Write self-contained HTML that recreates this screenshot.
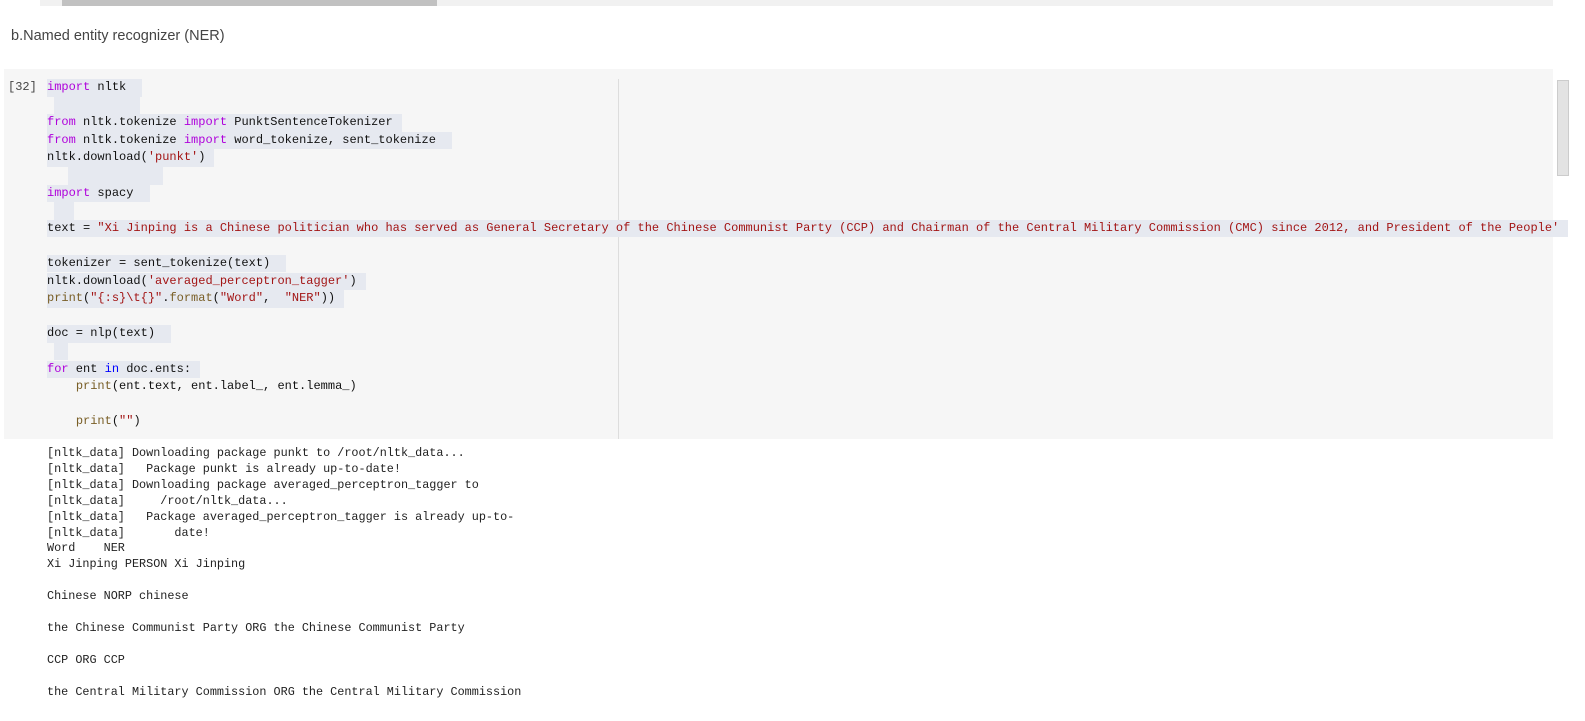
<!DOCTYPE html>
<html><head><meta charset="utf-8"><style>
body{margin:0;width:1585px;height:721px;overflow:hidden;background:#fff;position:relative;font-family:"Liberation Sans",sans-serif}
.hs{position:absolute;left:40px;top:0;width:1513px;height:6px;background:#f1f1f1}
.ht{position:absolute;left:62px;top:0;width:375px;height:6px;background:#c1c1c1}
.title{position:absolute;left:11px;top:28px;font-size:14.5px;color:#444}
.cell{position:absolute;left:4px;top:69px;width:1549px;height:370px;background:#f6f6f6}
.vl{position:absolute;left:618px;top:79px;width:1px;height:360px;background:#ddd}
.num{position:absolute;left:8px;top:79px;font:12px "Liberation Mono",monospace;color:#444;line-height:17.6px}
.l{position:absolute;left:47px;font:12px/17.6px "Liberation Mono",monospace;color:#111;white-space:pre}
.l span.h{background:#e6e9f0;padding-right:9px;display:inline-block}
.k{color:#af00db}.b{color:#0000ff}.s{color:#a31515}.f{color:#795e26}
.bl{position:absolute;left:54px;height:17.6px;background:#e6e9f0}
.o{position:absolute;left:47px;font:11.8px/15.9px "Liberation Mono",monospace;color:#222;white-space:pre}
.sb{position:absolute;left:1557px;top:80px;width:10px;height:94px;background:#e3e3e3;border:1px solid #ccc}
</style></head><body>
<div class="hs"></div><div class="ht"></div>
<div class="title">b.Named entity recognizer (NER)</div>
<div class="cell"></div><div class="vl"></div>
<div class="num">[32]</div>
<div class="l" style="top:79px"><span class="h"><span class="k">import</span> nltk </span></div>
<div class="bl" style="top:96.6px;width:86px"></div>
<div class="l" style="top:114.2px"><span class="h"><span class="k">from</span> nltk.tokenize <span class="k">import</span> PunktSentenceTokenizer</span></div>
<div class="l" style="top:131.8px"><span class="h"><span class="k">from</span> nltk.tokenize <span class="k">import</span> word_tokenize, sent_tokenize </span></div>
<div class="l" style="top:149.4px"><span class="h">nltk.download(<span class="s">'punkt'</span>)</span></div>
<div class="bl" style="top:167px;width:95px;left:68px"></div>
<div class="l" style="top:184.6px"><span class="h"><span class="k">import</span> spacy </span></div>
<div class="bl" style="top:202.2px;width:20px"></div>
<div class="l" style="top:219.8px"><span class="h">text = <span class="s">"Xi Jinping is a Chinese politician who has served as General Secretary of the Chinese Communist Party (CCP) and Chairman of the Central Military Commission (CMC) since 2012, and President of the People'</span></span></div>
<div class="l" style="top:254.9px"><span class="h">tokenizer = sent_tokenize(text) </span></div>
<div class="l" style="top:272.5px"><span class="h">nltk.download(<span class="s">'averaged_perceptron_tagger'</span>)</span></div>
<div class="l" style="top:290.1px"><span class="h"><span class="f">print</span>(<span class="s">"{:s}\t{}"</span>.<span class="f">format</span>(<span class="s">"Word"</span>,  <span class="s">"NER"</span>))</span></div>
<div class="l" style="top:325.3px"><span class="h">doc = nlp(text) </span></div>
<div class="bl" style="top:342.9px;width:14px"></div>
<div class="l" style="top:360.5px"><span class="h"><span class="k">for</span> ent <span class="b">in</span> doc.ents:</span></div>
<div class="l" style="top:378.1px">    <span class="f">print</span>(ent.text, ent.label_, ent.lemma_)</div>
<div class="l" style="top:413.3px">    <span class="f">print</span>(<span class="s">""</span>)</div>
<div class="sb"></div>
<div class="o" style="top:446px">[nltk_data] Downloading package punkt to /root/nltk_data...
[nltk_data]   Package punkt is already up-to-date!
[nltk_data] Downloading package averaged_perceptron_tagger to
[nltk_data]     /root/nltk_data...
[nltk_data]   Package averaged_perceptron_tagger is already up-to-
[nltk_data]       date!
Word	NER
Xi Jinping PERSON Xi Jinping

Chinese NORP chinese

the Chinese Communist Party ORG the Chinese Communist Party

CCP ORG CCP

the Central Military Commission ORG the Central Military Commission</div>
</body></html>
